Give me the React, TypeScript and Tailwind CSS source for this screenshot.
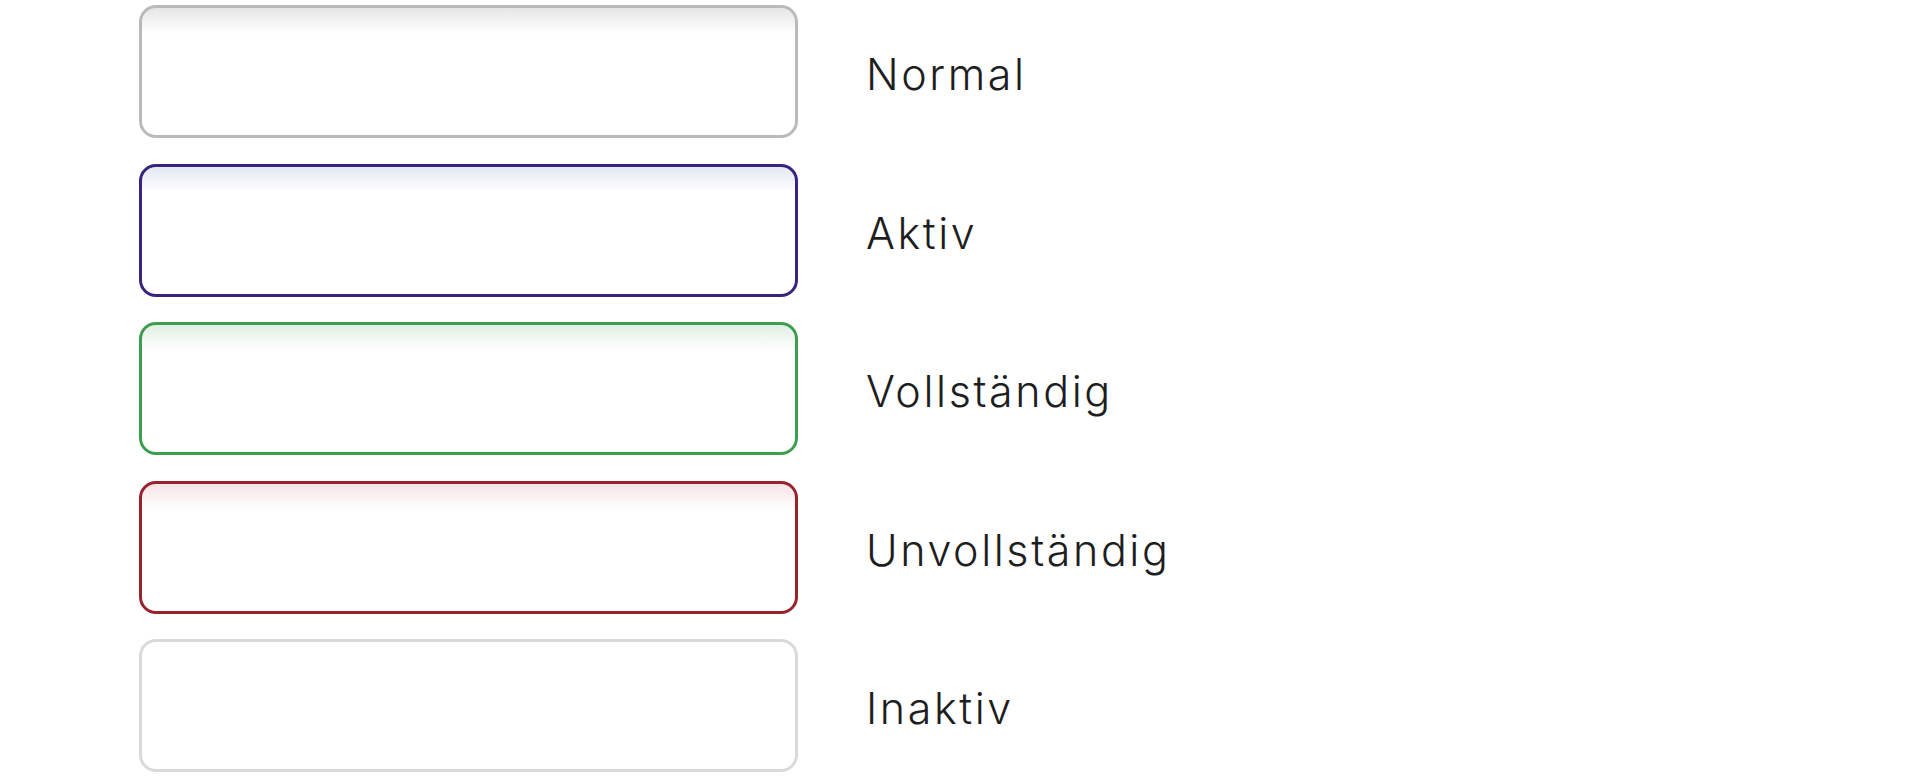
const states = [
  {
    label: "Normal",
    box: "border-[#bababa] bg-[linear-gradient(to_bottom,#e6e6e6_0px,#ffffff_26px)]",
  },
  {
    label: "Aktiv",
    box: "border-[#38237f] bg-[linear-gradient(to_bottom,#e4e8f3_0px,#ffffff_26px)]",
  },
  {
    label: "Vollständig",
    box: "border-[#3f9d50] bg-[linear-gradient(to_bottom,#e2efe4_0px,#ffffff_26px)]",
  },
  {
    label: "Unvollständig",
    box: "border-[#98232f] bg-[linear-gradient(to_bottom,#f7e3e6_0px,#ffffff_26px)]",
  },
  {
    label: "Inaktiv",
    box: "border-[#dadada] bg-white",
  },
];

export default function App() {
  return (
    <div className="min-h-screen bg-white pt-[5px] pl-[139px] font-['Inter',sans-serif]">
      <div className="flex flex-col gap-[25.5px]">
        {states.map((s) => (
          <div key={s.label} className="flex items-center">
            <div className={"h-[133px] w-[659px] rounded-[17px] border-[3px] " + s.box} />
            <span className="ml-[68px] pt-[6px] text-[43px] font-light leading-none tracking-[0.06em] text-[#1e1e1e]">
              {s.label}
            </span>
          </div>
        ))}
      </div>
    </div>
  );
}
